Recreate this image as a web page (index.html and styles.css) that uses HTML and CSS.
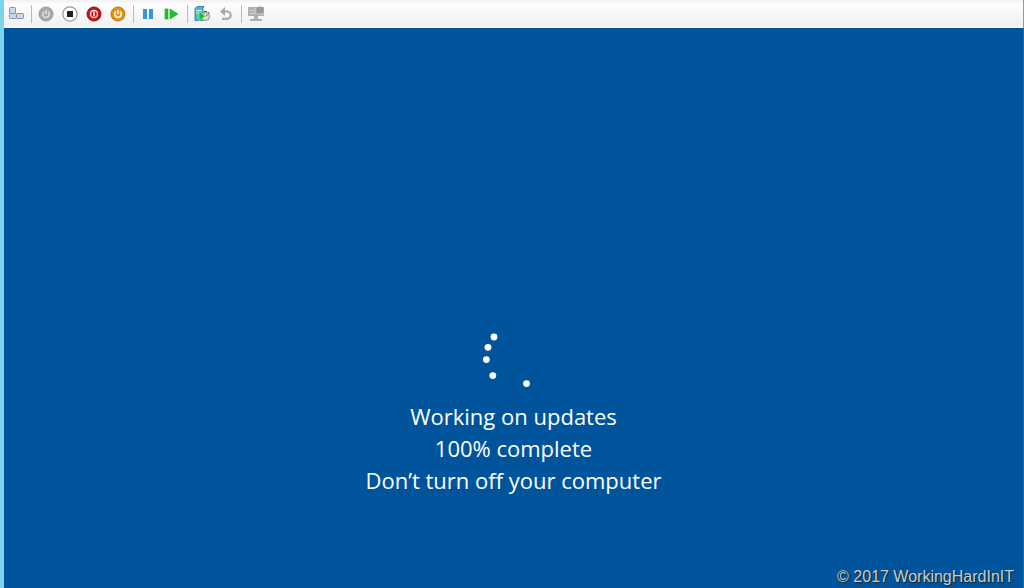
FILE: index.html
```
<!DOCTYPE html>
<html lang="en">
<head>
  <meta charset="UTF-8" />
  <meta name="viewport" content="width=device-width, initial-scale=1.0">
  <title>Virtual Machine Connection</title>
  <link rel="stylesheet" href="styles.css">
</head>
<body>
  <div class="toolbar" role="toolbar" aria-label="Virtual machine">
    <button class="tool" aria-label="Ctrl+Alt+Delete">
      <svg width="16" height="16" viewBox="0 0 16 16" fill="#ccd8ea" stroke="#8290ab">
        <rect x="1.5" y="1.5" width="6" height="6" rx="1"/>
        <rect x="1.5" y="7.5" width="7" height="5" rx="1"/>
        <rect x="8.5" y="7.5" width="7" height="5" rx="1"/>
      </svg>
    </button>
    <span class="divider"></span>
    <button class="tool" aria-label="Start" disabled>
      <svg width="16" height="16" viewBox="0 0 16 16" fill="none">
        <circle cx="8" cy="8" r="7" fill="#aaa" stroke="#999"/>
        <path d="M6 5.7a3.2 3.2 0 1 0 4 0M8 4v4" stroke="#e8e8e8" stroke-width="1.4"/>
      </svg>
    </button>
    <button class="tool" aria-label="Turn off">
      <svg width="16" height="16" viewBox="0 0 16 16">
        <circle cx="8" cy="8" r="7.2" fill="#fff" stroke="#999" stroke-width="1.2"/>
        <rect x="5" y="5" width="6" height="6" fill="#222"/>
      </svg>
    </button>
    <button class="tool" aria-label="Shut down">
      <svg width="16" height="16" viewBox="0 0 16 16" fill="none">
        <circle cx="8" cy="8" r="7" fill="#d01010" stroke="#a00c0c"/>
        <circle cx="8" cy="8" r="3.5" stroke="#fff" stroke-width="1.3"/>
        <path d="M8 6v4" stroke="#fff" stroke-width="1.4"/>
      </svg>
    </button>
    <button class="tool" aria-label="Save">
      <svg width="16" height="16" viewBox="0 0 16 16" fill="none">
        <circle cx="8" cy="8" r="7" fill="#ee9010" stroke="#bc7412"/>
        <path d="M6 5.7a3.2 3.2 0 1 0 4 0M8 4v4" stroke="#fff" stroke-width="1.5"/>
      </svg>
    </button>
    <span class="divider"></span>
    <button class="tool" aria-label="Pause">
      <svg width="16" height="16" viewBox="0 0 16 16" fill="#3594e6">
        <rect x="3" y="3" width="4" height="10"/>
        <rect x="9" y="3" width="4" height="10"/>
      </svg>
    </button>
    <button class="tool" aria-label="Reset">
      <svg width="16" height="16" viewBox="0 0 16 16" fill="#24c02c" stroke="#18a324" stroke-width="0.6">
        <rect x="1" y="3" width="3" height="10"/>
        <path d="M6 3v10L14 8z"/>
      </svg>
    </button>
    <span class="divider"></span>
    <button class="tool" aria-label="Checkpoint">
      <svg width="16" height="16" viewBox="0 0 16 16" fill="none">
        <path d="M1 2.5L3 .5h7l-1 2v12H1z" fill="#4fb9c6" stroke="#2e8f9c"/>
        <path d="M2 4.5h6M2 7h4" stroke="#d2f5f7" stroke-width="1.2"/>
        <circle cx="11.5" cy="10.5" r="4" fill="#dcdcd2" stroke="#888"/>
        <path d="M10 5.5h3M14 6l1.5 1.5M11.5 10.5l2-2" stroke="#555"/>
        <path d="M5 5.5v9.5l6.5-5z" fill="#18c41a" stroke="#fff" stroke-width="0.4"/>
      </svg>
    </button>
    <button class="tool" aria-label="Revert" disabled>
      <svg width="16" height="16" viewBox="0 0 16 16" fill="none">
        <path d="M5 5.5h4a3.7 3.7 0 0 1 0 7.4H4" stroke="#aaa" stroke-width="2.2"/>
        <path d="M2 5.5L7 1v9z" fill="#aaa"/>
      </svg>
    </button>
    <span class="divider"></span>
    <button class="tool" aria-label="Enhanced session" disabled>
      <svg width="18" height="16" viewBox="0 0 18 16" fill="#b0b0b0">
        <path d="M1 1h16v9H1z"/>
        <path d="M7 10h4v3h4v2H3v-2h4z"/>
        <path d="M2.5 4.5h4M3 7.5h5M8 2v6" fill="none" stroke="#d5d5d5"/>
        <circle cx="13" cy="4" r="3.5" fill="#999"/>
        <path d="M11 8h6" stroke="#ccc"/>
      </svg>
    </button>
  </div>

  <main class="screen">
    <svg class="spinner" width="64" height="60" viewBox="0 0 64 60" fill="#fff" role="img" aria-label="Loading">
      <circle cx="12" cy="5" r="3.4"/>
      <circle cx="6" cy="15.3" r="3.4"/>
      <circle cx="4.4" cy="27.6" r="3.4"/>
      <circle cx="10.8" cy="43.6" r="3.4"/>
      <circle cx="44.5" cy="51.6" r="3.4"/>
    </svg>
    <p class="status">Working on updates<br>100% complete<br>Don’t turn off your computer</p>
  </main>
  <div class="watermark">© 2017 WorkingHardInIT</div>
</body>
</html>
```
FILE: styles.css
```
* {
  box-sizing: border-box;
}
body {
  margin: 0;
  min-height: 100vh;
  display: flex;
  flex-direction: column;
  border-left: 4px solid #7fd3ea;
  background-color: #00549b;
}
.toolbar {
  display: flex;
  align-items: center;
  height: 28px;
  background: linear-gradient(#f1f1f1, #fdfdfd 15%, #f1f1f1 90%, #fff);
  border-right: 1px solid #999;
}
.tool {
  display: flex;
  align-items: center;
  justify-content: center;
  width: 24px;
  height: 24px;
  padding: 0;
  border: none;
  background: none;
}
.divider {
  width: 1px;
  height: 18px;
  margin: 0 2px 0 3px;
  background-color: #bbb;
}
.screen {
  flex: 1;
  display: flex;
  flex-direction: column;
  align-items: center;
  justify-content: flex-end;
  padding-bottom: 92px;
  border-right: 1px solid #1c68ae;
}
.status {
  margin: 8px 0 0;
  font-family: "Open Sans", "Segoe UI", sans-serif;
  font-size: 22px;
  line-height: 32px;
  text-align: center;
  color: #fff;
}
.watermark {
  position: absolute;
  right: 10px;
  bottom: 1px;
  font-family: "Liberation Sans", Arial, sans-serif;
  font-size: 16px;
  line-height: 20px;
  color: #c5ccd4;
  text-shadow: 1px 1px 1px #222;
}
```
